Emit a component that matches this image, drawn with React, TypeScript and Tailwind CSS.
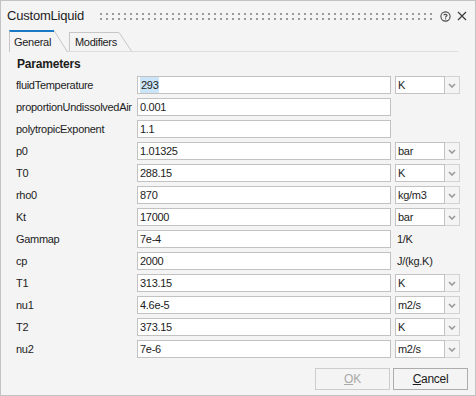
import React from "react";

type Row = {
  label: string;
  value: string;
  unit?: string;
  combo?: boolean;
  selected?: boolean;
};

const rows: Row[] = [
  { label: "fluidTemperature", value: "293", unit: "K", combo: true, selected: true },
  { label: "proportionUndissolvedAir", value: "0.001" },
  { label: "polytropicExponent", value: "1.1" },
  { label: "p0", value: "1.01325", unit: "bar", combo: true },
  { label: "T0", value: "288.15", unit: "K", combo: true },
  { label: "rho0", value: "870", unit: "kg/m3", combo: true },
  { label: "Kt", value: "17000", unit: "bar", combo: true },
  { label: "Gammap", value: "7e-4", unit: "1/K" },
  { label: "cp", value: "2000", unit: "J/(kg.K)" },
  { label: "T1", value: "313.15", unit: "K", combo: true },
  { label: "nu1", value: "4.6e-5", unit: "m2/s", combo: true },
  { label: "T2", value: "373.15", unit: "K", combo: true },
  { label: "nu2", value: "7e-6", unit: "m2/s", combo: true },
];

function Gripper() {
  return (
    <svg width="334" height="8" className="block">
      <defs>
        <pattern id="grip" width="6" height="5" patternUnits="userSpaceOnUse">
          <rect x="0" y="0" width="2" height="2" fill="#9a9a9a" />
        </pattern>
      </defs>
      <rect x="0" y="0" width="334" height="7" fill="url(#grip)" />
    </svg>
  );
}

function Slant({ w, h, fill }: { w: number; h: number; fill: string }) {
  return (
    <svg width={w} height={h} className="block shrink-0">
      <polygon points={`0,0 ${w - 1},${h} 0,${h}`} fill={fill} />
      <line x1="0" y1="0.5" x2={w - 0.5} y2={h} stroke="#c6c6c6" strokeWidth="1" />
    </svg>
  );
}

function Chevron() {
  return (
    <svg width="8" height="5" viewBox="0 0 8 5">
      <polyline points="1,1 4,4 7,1" fill="none" stroke="#9a9a9a" strokeWidth="1.6" />
    </svg>
  );
}

function ParamRow({ row }: { row: Row }) {
  return (
    <div className="flex h-[18px] items-center">
      <div className="w-[136px] shrink-0 whitespace-nowrap pl-[15px] leading-none text-[#1c1c1c]">{row.label}</div>
      <div className="flex h-[18px] w-[254px] shrink-0 items-center border border-[#c2c2c2] bg-white pl-[2px] text-[#1c1c1c]">
        {row.selected ? <span className="bg-[#cce4f7] px-px">{row.value}</span> : row.value}
      </div>
      {row.combo ? (
        <div className="ml-[4px] flex h-[18px] shrink-0">
          <div className="flex w-[50px] items-center border border-[#c2c2c2] bg-white pl-[2px] text-[#1c1c1c]">
            {row.unit}
          </div>
          <div className="flex w-[15px] items-center justify-center border border-l-0 border-[#d2d2d2] bg-[#f4f4f4]">
            <Chevron />
          </div>
        </div>
      ) : row.unit ? (
        <div className="ml-[6px] shrink-0 whitespace-nowrap text-[#1c1c1c]">{row.unit}</div>
      ) : null}
    </div>
  );
}

export default function App() {
  return (
    <div
      className="flex h-[396px] w-[476px] flex-col border border-[#c3c3c3] bg-[#f4f4f4] text-[11px] tracking-[-0.3px]"
      style={{ fontFamily: '"Liberation Sans", Arial, sans-serif' }}
    >
      {/* title bar */}
      <div className="flex h-[30px] items-center pl-[6px] pr-[8px]">
        <span className="text-[13px] tracking-[-0.2px] text-[#1c1c1c]">CustomLiquid</span>
        <div className="ml-[16px] mt-[2px]">
          <Gripper />
        </div>
        <div className="ml-auto flex items-center gap-[6px]">
          <svg width="11" height="11" viewBox="0 0 11 11">
            <circle cx="5.5" cy="5.5" r="4.6" fill="none" stroke="#4a4a4a" strokeWidth="1.1" />
            <path d="M3.9 4.3 C3.9 3.1 7.1 3.1 7.1 4.3 C7.1 5.2 5.5 5.3 5.5 6.4" fill="none" stroke="#4a4a4a" strokeWidth="1.1" />
            <rect x="5" y="7.3" width="1.1" height="1.1" fill="#4a4a4a" />
          </svg>
          <svg width="10" height="10" viewBox="0 0 10 10">
            <path d="M1 1 L9 9 M9 1 L1 9" stroke="#3c3c3c" strokeWidth="1.2" />
          </svg>
        </div>
      </div>

      {/* tabs */}
      <div className="ml-[8px] mr-[17px] flex h-[21px] items-end border-b border-[#dcdcdc]">
        <div className="relative -mb-px flex h-[22px] items-stretch">
          <div className="flex w-[45px] items-center border-l border-t-2 border-l-[#c6c6c6] border-t-[#1a79c4] bg-[#f4f4f4] pl-[4px] text-[#1c1c1c]">
            General
          </div>
          <Slant w={14} h={22} fill="#f4f4f4" />
        </div>
        <div className="ml-[1px] flex h-[19px] items-stretch">
          <div className="flex w-[50px] items-center border-l border-t border-[#c6c6c6] pl-[5px] text-[#1c1c1c]">
            Modifiers
          </div>
          <Slant w={13} h={19} fill="#f4f4f4" />
        </div>
      </div>

      {/* parameters */}
      <div className="flex h-[24px] items-center pl-[16px] text-[12px] font-bold tracking-[-0.2px] text-[#1c1c1c]">
        Parameters
      </div>
      <div className="flex flex-col gap-[4px]">
        {rows.map((r) => (
          <ParamRow key={r.label} row={r} />
        ))}
      </div>

      {/* buttons */}
      <div className="mt-auto flex justify-end gap-[3px] pb-[5px] pr-[7px]">
        <button className="h-[22px] w-[75px] border border-[#cdcdcd] bg-[#f4f4f4] text-[12px] text-[#a8a8a8]">
          <span className="underline">O</span>K
        </button>
        <button className="h-[22px] w-[75px] border border-[#adadad] bg-[#f4f4f4] text-[12px] text-[#1c1c1c]">
          <span className="underline">C</span>ancel
        </button>
      </div>
    </div>
  );
}
